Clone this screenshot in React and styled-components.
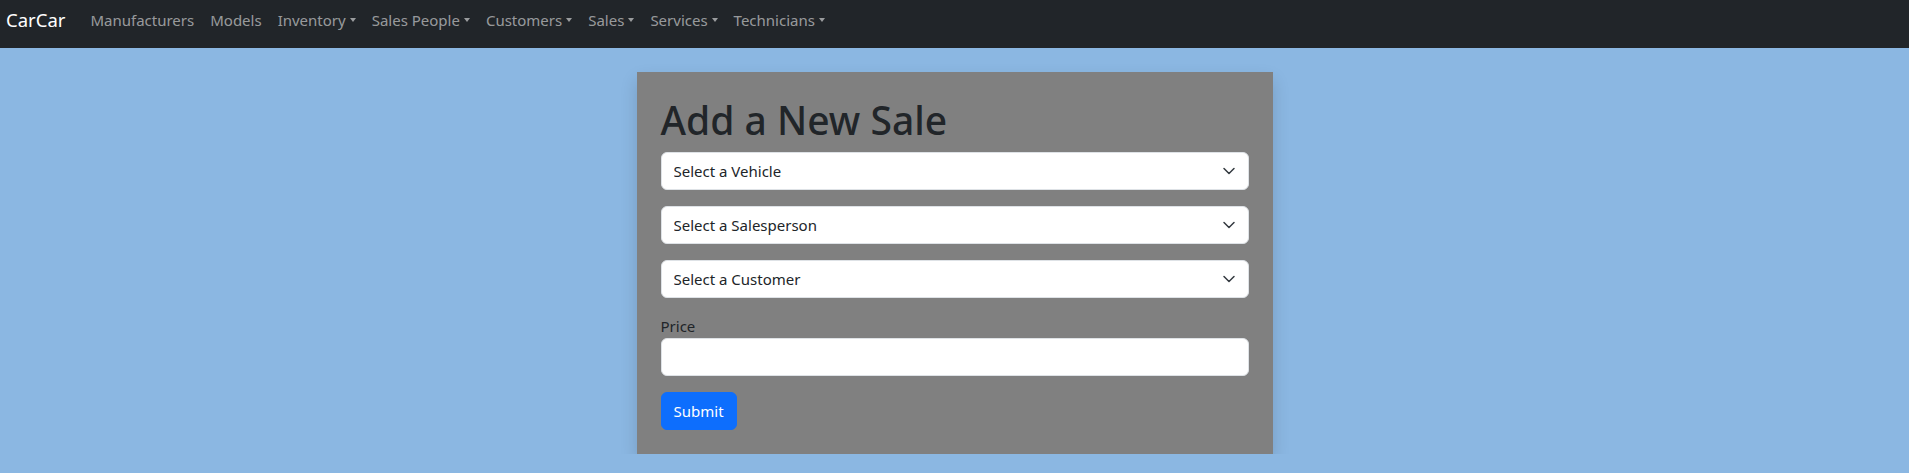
import React from 'react';
import styled, { createGlobalStyle } from 'styled-components';

const GlobalStyle = createGlobalStyle`
  body {
    margin: 0;
    background-color: #8bb7e2;
    font-family: "Noto Sans", "Open Sans", sans-serif;
    color: #212529;
  }
`;

const Navbar = styled.nav`
  display: flex;
  align-items: center;
  height: 48px;
  box-sizing: border-box;
  padding: 0 6px 9px;
  background-color: #212529;
`;

const Brand = styled.a`
  margin-right: 17px;
  font-size: 18.5px;
  line-height: 30px;
  color: #fff;
  text-decoration: none;
`;

const NavList = styled.ul`
  display: flex;
  margin: 0;
  padding: 0;
  list-style: none;
`;

const NavLink = styled.a`
  display: block;
  padding: 8px;
  font-size: 15px;
  line-height: 24px;
  color: rgba(255, 255, 255, 0.55);
  text-decoration: none;
  white-space: nowrap;

  ${(p) => p.$dropdown && `
    &::after {
      content: "";
      display: inline-block;
      margin-left: 4px;
      vertical-align: 4px;
      border-top: 4px solid;
      border-right: 3.5px solid transparent;
      border-left: 3.5px solid transparent;
    }
  `}
`;

const Column = styled.div`
  width: 636px;
  margin: 24px auto 0;
`;

const Card = styled.div`
  padding: 24px;
  background-color: #808080;
  box-shadow: 0 8px 16px rgba(0, 0, 0, 0.15);
`;

const Title = styled.h1`
  margin: 0 0 8px;
  font-size: 39px;
  font-weight: 500;
  line-height: 48px;
  color: #212529;
`;

const Field = styled.div`
  position: relative;
  margin-bottom: 16px;
`;

const Select = styled.select`
  display: block;
  width: 100%;
  height: 38px;
  padding: 6px 36px 6px 12px;
  font-family: inherit;
  font-size: 15px;
  line-height: 24px;
  color: #212529;
  background-color: #fff;
  border: 1px solid #dee2e6;
  border-radius: 6px;
  appearance: none;
`;

const Chevron = styled.svg`
  position: absolute;
  top: 13px;
  right: 13px;
  width: 14px;
  height: 12px;
  pointer-events: none;
`;

const Label = styled.label`
  display: inline-block;
  font-size: 15px;
  line-height: 24px;
  color: #212529;
`;

const Input = styled.input`
  display: block;
  box-sizing: border-box;
  width: 100%;
  height: 38px;
  padding: 6px 12px;
  font-family: inherit;
  font-size: 15px;
  background-color: #fff;
  border: 1px solid #dee2e6;
  border-radius: 6px;
`;

const Button = styled.button`
  height: 38px;
  padding: 6px 12px;
  font-family: inherit;
  font-size: 15px;
  line-height: 24px;
  color: #fff;
  background-color: #0d6efd;
  border: 1px solid #0d6efd;
  border-radius: 6px;
`;

const links = [
  { label: 'Manufacturers' },
  { label: 'Models' },
  { label: 'Inventory', dropdown: true },
  { label: 'Sales People', dropdown: true },
  { label: 'Customers', dropdown: true },
  { label: 'Sales', dropdown: true },
  { label: 'Services', dropdown: true },
  { label: 'Technicians', dropdown: true },
];

function SelectField({ placeholder }) {
  return (
    <Field>
      <Select defaultValue="">
        <option value="">{placeholder}</option>
      </Select>
      <Chevron viewBox="0 0 14 12" preserveAspectRatio="none">
        <path d="m2 3.5 5 5 5-5" fill="none" stroke="#343a40" strokeWidth="1.5" strokeLinecap="round" strokeLinejoin="round" />
      </Chevron>
    </Field>
  );
}

export default function App() {
  return (
    <>
      <GlobalStyle />
      <Navbar>
        <Brand href="#">CarCar</Brand>
        <NavList>
          {links.map((link) => (
            <li key={link.label}>
              <NavLink href="#" $dropdown={link.dropdown}>{link.label}</NavLink>
            </li>
          ))}
        </NavList>
      </Navbar>
      <Column>
        <Card>
          <Title>Add a New Sale</Title>
          <form onSubmit={(e) => e.preventDefault()}>
            <SelectField placeholder="Select a Vehicle" />
            <SelectField placeholder="Select a Salesperson" />
            <SelectField placeholder="Select a Customer" />
            <Field>
              <Label htmlFor="price">Price</Label>
              <Input id="price" type="text" />
            </Field>
            <Button type="submit">Submit</Button>
          </form>
        </Card>
      </Column>
    </>
  );
}
